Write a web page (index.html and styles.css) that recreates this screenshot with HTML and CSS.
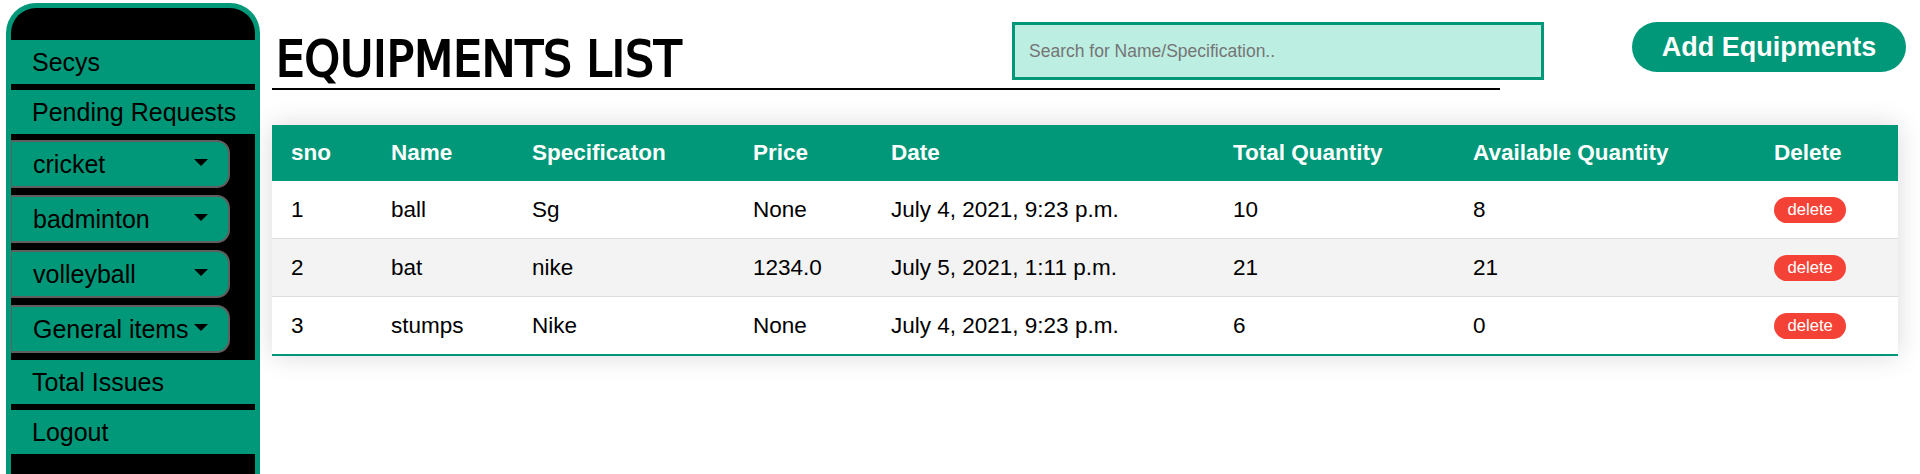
FILE: index.html
```html
<!DOCTYPE html>
<html>
<head>
<meta charset="utf-8">
<link rel="stylesheet" href="styles.css">
</head>
<body>
<div class="page">
  <nav class="sidebar">
    <div class="side-inner">
      <a class="side-link">Secys</a>
      <a class="side-link">Pending Requests</a>
      <div class="drops">
        <button class="drop"><span>cricket</span><i class="caret"></i></button>
        <button class="drop"><span>badminton</span><i class="caret"></i></button>
        <button class="drop"><span>volleyball</span><i class="caret"></i></button>
        <button class="drop"><span>General items</span><i class="caret"></i></button>
      </div>
      <a class="side-link">Total Issues</a>
      <a class="side-link">Logout</a>
    </div>
  </nav>
  <main class="main">
    <div class="head">
      <h1 class="title">EQUIPMENTS LIST</h1>
      <input class="search" type="text" placeholder="Search for Name/Specification..">
      <button class="add">Add Equipments</button>
    </div>
    <table class="styled-table">
      <thead>
        <tr><th>sno</th><th>Name</th><th>Specificaton</th><th>Price</th><th>Date</th><th>Total Quantity</th><th>Available Quantity</th><th>Delete</th></tr>
      </thead>
      <tbody>
        <tr><td>1</td><td>ball</td><td>Sg</td><td>None</td><td>July 4, 2021, 9:23 p.m.</td><td>10</td><td>8</td><td><button class="del">delete</button></td></tr>
        <tr><td>2</td><td>bat</td><td>nike</td><td>1234.0</td><td>July 5, 2021, 1:11 p.m.</td><td>21</td><td>21</td><td><button class="del">delete</button></td></tr>
        <tr><td>3</td><td>stumps</td><td>Nike</td><td>None</td><td>July 4, 2021, 9:23 p.m.</td><td>6</td><td>0</td><td><button class="del">delete</button></td></tr>
      </tbody>
    </table>
  </main>
</div>
</body>
</html>
```
FILE: styles.css
```css
html, body {
  margin: 0;
  padding: 0;
  background: #fff;
  overflow: hidden;
  height: 474px;
}
body {
  font-family: "Liberation Sans", Arial, sans-serif;
  color: #000;
}
.page {
  display: flex;
  align-items: flex-start;
  padding: 3px 0 0 6px;
}
.sidebar {
  width: 244px;
  height: 520px;
  border: 5px solid #009879;
  border-bottom: none;
  border-radius: 30px 30px 0 0;
  background: #000;
  flex-shrink: 0;
  overflow: hidden;
}
.side-inner {
  display: flex;
  flex-direction: column;
  padding-top: 32px;
}
.side-link {
  display: block;
  background: #009879;
  height: 44px;
  line-height: 44px;
  padding-left: 21px;
  font-size: 25px;
  margin-bottom: 6px;
  color: #000;
}
.drops {
  display: flex;
  flex-direction: column;
  gap: 7px;
  padding-bottom: 7px;
}
.drop {
  width: 219px;
  height: 48px;
  box-sizing: border-box;
  background: #009879;
  border: 2px solid #5f5f5f;
  border-left-width: 1px;
  border-radius: 0 13px 13px 0;
  display: flex;
  align-items: center;
  justify-content: space-between;
  padding: 0 20px 0 21px;
  font-family: "Liberation Sans", Arial, sans-serif;
  font-size: 25px;
  color: #000;
  text-align: left;
}
.caret {
  width: 0;
  height: 0;
  border-left: 7px solid transparent;
  border-right: 7px solid transparent;
  border-top: 7px solid #000;
  margin-top: -4px;
}
.main {
  margin-left: 12px;
  display: flex;
  flex-direction: column;
}
.head {
  display: grid;
  grid-template-columns: 740px 532px 88px 274px;
  align-items: start;
}
.title {
  grid-row: 1;
  grid-column: 1 / 4;
  width: 1228px;
  margin: 0;
  padding: 27px 0 0 4px;
  box-sizing: border-box;
  height: 87px;
  border-bottom: 2px solid #000;
  font-family: "DejaVu Sans Condensed", "Liberation Sans", sans-serif;
  font-weight: normal;
  font-size: 50px;
  line-height: 58px;
  letter-spacing: 0.2px;
  -webkit-text-stroke: 1.8px #000;
}
.search {
  grid-row: 1;
  grid-column: 2;
  margin-top: 19px;
  width: 532px;
  height: 58px;
  box-sizing: border-box;
  border: 3px solid #009879;
  background: #bdeee2;
  padding: 0 0 0 14px;
  font-family: "Liberation Sans", Arial, sans-serif;
  font-size: 17.5px;
  outline: none;
}
.search::placeholder {
  color: #757575;
}
.add {
  grid-row: 1;
  grid-column: 4;
  margin-top: 19px;
  width: 274px;
  height: 50px;
  border: none;
  border-radius: 25px;
  background: #009879;
  color: #fff;
  font-family: "Liberation Sans", Arial, sans-serif;
  font-weight: bold;
  font-size: 27px;
  padding: 0;
}
.styled-table {
  margin-top: 35px;
  border-collapse: collapse;
  width: 1626px;
  table-layout: fixed;
  font-size: 22.5px;
  box-shadow: 0 0 25px rgba(0, 0, 0, 0.15);
}
.styled-table thead tr {
  background: #009879;
  color: #fff;
  text-align: left;
}
.styled-table th,
.styled-table td {
  padding: 15px 19px;
  line-height: 26px;
  white-space: nowrap;
}
.styled-table th { font-weight: bold; box-sizing: border-box; }
.styled-table th:nth-child(1) { width: 100px; }
.styled-table th:nth-child(2) { width: 141px; }
.styled-table th:nth-child(3) { width: 221px; }
.styled-table th:nth-child(4) { width: 138px; }
.styled-table th:nth-child(5) { width: 342px; }
.styled-table th:nth-child(6) { width: 240px; }
.styled-table th:nth-child(7) { width: 301px; }
.styled-table th:nth-child(8) { width: 143px; }
.styled-table tbody tr {
  border-bottom: 1px solid #dddddd;
}
.styled-table tbody tr:nth-of-type(even) {
  background: #f3f3f3;
}
.styled-table tbody tr:last-of-type {
  border-bottom: 2px solid #009879;
}
.del {
  background: #f44336;
  color: #fff;
  border: none;
  border-radius: 13px;
  height: 26px;
  padding: 0 13.5px;
  font-family: "Liberation Sans", Arial, sans-serif;
  font-size: 16.67px;
  vertical-align: middle;
}
```
